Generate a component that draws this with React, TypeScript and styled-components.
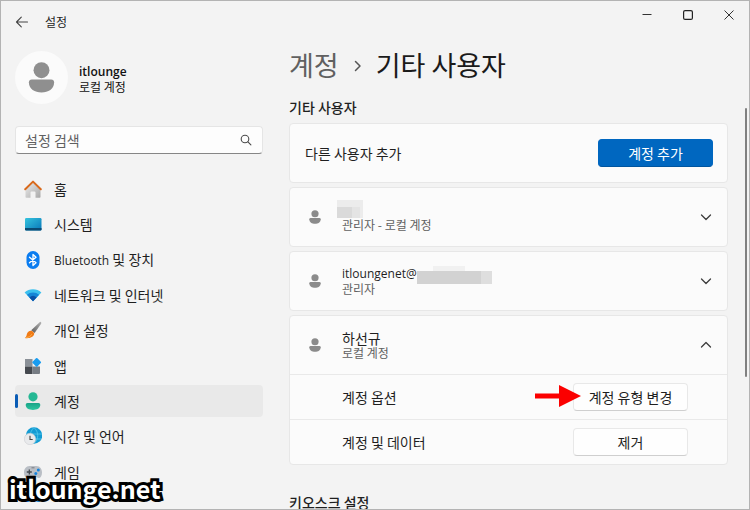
import React from "react";
import styled, { createGlobalStyle, css } from "styled-components";

const GlobalStyle = createGlobalStyle`
  * { box-sizing: border-box; }
  html, body, #root { height: 100%; }
  body {
    margin: 0;
    background: #f3f3f3;
    color: #1f1f1f;
    font-family: "Noto Sans CJK KR", "Noto Sans", sans-serif;
    font-size: 14px;
    line-height: 18px;
  }
  button, input { font: inherit; color: inherit; }
  svg { display: block; flex: none; }
`;

const Window = styled.div`
  position: relative;
  display: flex;
  flex-direction: column;
  height: 100vh;
  border: 1px solid #b3b3b3;
  background: #f3f3f3;
  overflow: hidden;
`;

const TitleBar = styled.header`
  display: flex;
  flex: none;
  align-items: flex-start;
  justify-content: space-between;
  height: 43px;
`;

const TitleGroup = styled.div`
  display: flex;
  align-items: center;
  gap: 16px;
  height: 42px;
  padding-left: 14px;
  font-size: 12px;
`;

const IconButton = styled.button`
  display: grid;
  place-items: center;
  padding: 0;
  border: 0;
  background: none;
`;

const WindowControls = styled.div`
  display: grid;
  grid-template-columns: repeat(3, 41px);
  height: 28px;
`;

const Body = styled.div`
  display: flex;
  flex: 1;
  min-height: 0;
`;

const Sidebar = styled.aside`
  display: flex;
  flex-direction: column;
  flex: none;
  width: 262px;
  padding: 7px 0 7px 14px;
`;

const Profile = styled.div`
  display: flex;
  align-items: center;
  gap: 11px;
`;

const Avatar = styled.div`
  display: grid;
  place-items: center;
  width: 53px;
  height: 53px;
  border-radius: 50%;
  background: #fbfbfb;
`;

const ProfileText = styled.div`
  display: flex;
  flex-direction: column;
  padding-top: 2px;
  font-size: 12px;
  line-height: 15px;
  color: #111;
`;

const ProfileName = styled.strong`
  font: 600 12px/15px "Open Sans", sans-serif;
`;

const SearchBox = styled.label`
  display: flex;
  flex: none;
  align-items: center;
  height: 28px;
  margin: 22px 0 19px;
  padding: 0 10px 0 9px;
  border: 1px solid #e5e5e5;
  border-bottom-color: #868686;
  border-radius: 4px;
  background: #fdfdfd;
`;

const SearchInput = styled.input`
  flex: 1;
  min-width: 0;
  padding: 0;
  border: 0;
  outline: 0;
  background: none;
  &::placeholder { color: #606060; opacity: 1; }
`;

const NavViewport = styled.nav`
  flex: 1;
  min-height: 0;
  overflow: hidden;
`;

const NavList = styled.div`
  display: flex;
  flex-direction: column;
  justify-content: space-between;
  min-height: 350px;
`;

const NavItem = styled.a<{ $active?: boolean }>`
  display: flex;
  align-items: center;
  gap: 12px;
  height: 32px;
  padding-left: 9px;
  border-radius: 4px;
  color: #1f1f1f;
  text-decoration: none;
  ${(p) =>
    p.$active &&
    css`
      position: relative;
      background: #e9e9e9;
      &::before {
        content: "";
        position: absolute;
        left: 0;
        top: 9px;
        width: 3px;
        height: 14px;
        border-radius: 2px;
        background: #0a5cb5;
      }
    `}
`;

const Main = styled.main`
  flex: 1;
  min-width: 0;
  padding: 3px 21px 0 26px;
`;

const Breadcrumb = styled.h1`
  display: flex;
  align-items: center;
  margin: 0;
  font-size: 27px;
  font-weight: 400;
  line-height: 36px;
  color: #1a1a1a;
`;

const Parent = styled.a`
  color: #606060;
  text-decoration: none;
`;

const Separator = styled.span`
  display: grid;
  padding: 2px 14px 0 15px;
`;

const SectionTitle = styled.h2`
  margin: 0;
  padding: 15px 0 7px;
  font-size: 14px;
  font-weight: 500;
  line-height: 18px;
`;

const Cards = styled.div`
  display: flex;
  flex-direction: column;
  gap: 4px;
  margin-bottom: 13px;
`;

const Card = styled.section`
  border: 1px solid #e7e7e7;
  border-radius: 4px;
  background: #fbfbfb;
`;

const CardRow = styled.div`
  display: flex;
  align-items: center;
  justify-content: space-between;
  height: 58px;
  padding: 0 14px 0 15px;
`;

const UserHeader = styled.button`
  display: flex;
  align-items: center;
  width: 100%;
  height: 58px;
  padding: 0 15px 0 18px;
  border: 0;
  background: none;
  text-align: left;
`;

const UserText = styled.span`
  display: flex;
  flex: 1;
  flex-direction: column;
  padding-left: 20px;
`;

const UserName = styled.span`
  display: flex;
  height: 16px;
  font-size: 14px;
  line-height: 16px;
`;

const LatinName = styled.span`
  font: 12px/16px "Open Sans", sans-serif;
`;

const UserKind = styled.span`
  font-size: 12px;
  line-height: 14px;
  color: #616161;
`;

const NameMask = styled.svg`
  margin: -2px 0 0 -5px;
  overflow: visible;
`;

const OptionRow = styled.div`
  display: flex;
  align-items: center;
  justify-content: space-between;
  height: 45px;
  padding: 0 39px 0 52px;
  border-top: 1px solid #e9e9e9;
`;

const ActionButton = styled.button<{ $primary?: boolean }>`
  position: relative;
  width: 115px;
  height: 28px;
  padding: 0;
  border: 1px solid ${(p) => (p.$primary ? "#0067c0" : "#e8e8e8")};
  border-bottom-color: ${(p) => (p.$primary ? "#00559f" : "#cfcfcf")};
  border-radius: 4px;
  background: ${(p) => (p.$primary ? "#0067c0" : "#fefefe")};
  color: ${(p) => (p.$primary ? "#fff" : "#1f1f1f")};
  line-height: 18px;
`;

const Pointer = styled.svg`
  position: absolute;
  left: -39px;
  top: 1px;
`;

const ScrollThumb = styled.div`
  position: absolute;
  right: 2px;
  top: 107px;
  width: 2px;
  height: 53%;
  border-radius: 1px;
  background: #808080;
`;

const Watermark = styled.div`
  position: absolute;
  left: 8px;
  bottom: 5px;
  font-size: 25px;
  font-weight: 700;
  line-height: 32px;
  color: #fff;
  -webkit-text-stroke: 6px #000;
  paint-order: stroke fill;
`;

const LatinText = styled.span`
  font-family: "Open Sans", sans-serif;
  font-size: 12px;
`;

function Person({ size, color }: { size: number; color: string }) {
  return (
    <svg width={size} height={size} viewBox="0 0 32 32" fill={color}>
      <circle cx="16" cy="8.5" r="8.2" />
      <path d="M6 18h20a3 3 0 0 1 3 3c0 7-6 10.500-13 10.500S3 28 3 21a3 3 0 0 1 3-3z" />
    </svg>
  );
}

function Chevron({ up }: { up?: boolean }) {
  return (
    <svg width="12" height="12" viewBox="0 0 12 12" fill="none" stroke="#3d3d3d" strokeWidth="1.3" strokeLinecap="round" strokeLinejoin="round">
      <path d={up ? "M1.5 8 6 3.500l4.5 4.5" : "M1.5 4 6 8.5 10.5 4"} />
    </svg>
  );
}

const icons: Record<string, React.ReactNode> = {
  home: (
    <>
      <path d="M1.500 8.500 9 2l7.500 6.500V17a.8.8 0 0 1-.8.8H11.500V12.500a1 1 0 0 0-1-1h-3a1 1 0 0 0-1 1v5.300H2.300a.8.8 0 0 1-.8-.8z" fill="url(#wall)" />
      <path d="M1.200 9.300 9 1.600l7.800 7.700" fill="none" stroke="#d9691b" strokeWidth="2" strokeLinecap="round" strokeLinejoin="round" />
    </>
  ),
  system: (
    <>
      <rect x="1" y="3" width="16.500" height="12.500" rx="1.200" fill="url(#screen)" />
      <path d="M1 13h16.500v1.300a1.200 1.200 0 0 1-1.200 1.200H2.200A1.200 1.200 0 0 1 1 14.300z" fill="#0b4a72" />
    </>
  ),
  bluetooth: (
    <>
      <rect x="2.500" y="0" width="13" height="18" rx="6.500" fill="#0a7cf0" />
      <path d="m5.500 6.200 6.500 5.600L9 14.500v-11l3 2.700-6.500 5.600" fill="none" stroke="#fff" strokeWidth="1.300" strokeLinejoin="round" strokeLinecap="round" />
    </>
  ),
  network: (
    <>
      <path d="M.6 6.500a12.500 12.500 0 0 1 16.800 0L9 15.300z" fill="#3cc0ee" />
      <path d="M2.900 8.800a9 9 0 0 1 12.200 0L9 15.300z" fill="#1585d6" />
      <path d="M5.400 11.400a5.400 5.400 0 0 1 7.200 0L9 15.300z" fill="#0a4fa5" />
    </>
  ),
  brush: (
    <>
      <path d="M16.200.7c1 .2 1.400 1 .9 2L10.600 12 7.200 9.300z" fill="url(#handle)" />
      <path d="M6.800 9.700c1.700.2 3.200 1.500 3.500 3.100-.8 3.600-5.300 5-9.500 4.200 1.500-.8 1.700-2 2.100-3.900.5-2 2-3.400 3.900-3.400z" fill="#f07b16" />
      <path d="M2.200 16.500c2.800-.2 4.700-1.400 5.600-3.300" stroke="#ffb04a" fill="none" />
    </>
  ),
  apps: (
    <>
      <path d="M1 2h7.500v7.500H1z" fill="#8a9097" />
      <path d="M1 9.500h7.500V17H2a1 1 0 0 1-1-1z" fill="#45494f" />
      <path d="M8.500 9.500H16V16a1 1 0 0 1-1 1H8.500z" fill="#777d84" />
      <rect x="9.300" y="2" width="6.800" height="6.800" rx="1" transform="rotate(45 12.700 5.400)" fill="#199cf0" />
    </>
  ),
  account: (
    <>
      <circle cx="9" cy="4.800" r="4.600" fill="#25b894" />
      <path d="M3.500 11h11a1.800 1.800 0 0 1 1.800 1.800c0 3.400-3.300 5.200-7.300 5.200s-7.300-1.800-7.300-5.200A1.800 1.800 0 0 1 3.500 11z" fill="url(#body)" />
    </>
  ),
  time: (
    <>
      <circle cx="10" cy="8.500" r="8.200" fill="#149bd3" />
      <path d="M2 7h16M3 12h14M10 .5c-5 5-5 11 0 16M10 .5c5 5 5 11 0 16" fill="none" stroke="#5bd0ee" strokeWidth=".7" />
      <circle cx="6" cy="12" r="5.700" fill="#e9eaec" stroke="#c7c9cc" strokeWidth=".5" />
      <path d="M6 8.800V12.500h2.700" fill="none" stroke="#454545" strokeWidth="1.100" />
    </>
  ),
  game: (
    <>
      <path d="M5.500 3h7C16 3 18 6 18 9.500S16.500 15 14.800 15c-1.500 0-2.300-1.500-3.300-1.500h-5C5.500 13.500 4.700 15 3.200 15 1.500 15 0 13 0 9.500S2 3 5.500 3z" fill="#b9bec5" />
      <path d="M5.300 6.500v5M2.800 9h5" stroke="#444a50" strokeWidth="1.300" />
      <circle cx="14.300" cy="7" r="1.500" fill="#1683dc" />
      <circle cx="11.800" cy="10.500" r="1.500" fill="#1683dc" />
      <path d="M7.500 4.800h3" stroke="#757a80" />
    </>
  ),
  access: (
    <>
      <circle cx="9" cy="2" r="2" fill="#1683dc" />
      <path d="M2.500 3 9 6l6.500-3M9 6v5l-3.500 6M9 11l3.500 6" stroke="#1683dc" strokeWidth="1.400" fill="none" strokeLinecap="round" />
    </>
  ),
};

function NavIcon({ name }: { name: string }) {
  return (
    <svg width="18" height="18" viewBox="0 0 18 18" aria-hidden="true">
      {icons[name]}
    </svg>
  );
}

function Gradients() {
  return (
    <svg width="0" height="0" aria-hidden="true">
      <defs>
        <linearGradient id="wall" x1="0" y1="0" x2="1" y2="1">
          <stop stopColor="#ececec" />
          <stop offset="1" stopColor="#a9a9a9" />
        </linearGradient>
        <linearGradient id="screen" x1="0" y1="0" x2="1" y2="1">
          <stop stopColor="#35c4de" />
          <stop offset="1" stopColor="#0876b8" />
        </linearGradient>
        <linearGradient id="handle" x1="1" y1="0" x2="0" y2="1">
          <stop stopColor="#b5b5b5" />
          <stop offset="1" stopColor="#5a5a5a" />
        </linearGradient>
        <linearGradient id="body" x1="0" y1="0" x2="0" y2="1">
          <stop stopColor="#19a387" />
          <stop offset="1" stopColor="#2cc6a0" />
        </linearGradient>
      </defs>
    </svg>
  );
}

const navItems = [
  { icon: "home", label: "홈" },
  { icon: "system", label: "시스템" },
  { icon: "bluetooth", label: <><LatinText>Bluetooth</LatinText> 및 장치</> },
  { icon: "network", label: "네트워크 및 인터넷" },
  { icon: "brush", label: "개인 설정" },
  { icon: "apps", label: "앱" },
  { icon: "account", label: "계정", active: true },
  { icon: "time", label: "시간 및 언어" },
  { icon: "game", label: "게임" },
];

interface UserProps {
  name: React.ReactNode;
  kind: string;
  open?: boolean;
  children?: React.ReactNode;
}

function UserCard({ name, kind, open, children }: UserProps) {
  return (
    <Card>
      <UserHeader type="button" aria-expanded={!!open}>
        <Person size={14} color="#8b8b8b" />
        <UserText>
          <UserName>{name}</UserName>
          <UserKind>{kind}</UserKind>
        </UserText>
        <Chevron up={open} />
      </UserHeader>
      {children}
    </Card>
  );
}

export default function App() {
  return (
    <Window>
      <GlobalStyle />
      <TitleBar>
        <TitleGroup>
          <IconButton type="button" aria-label="뒤로">
            <svg width="14" height="12" viewBox="0 0 14 12" fill="none" stroke="#444" strokeWidth="1.100" strokeLinecap="round" strokeLinejoin="round">
              <path d="M12.500 6h-11M6.300 1.200 1.500 6l4.800 4.800" />
            </svg>
          </IconButton>
          <span>설정</span>
        </TitleGroup>
        <WindowControls>
          <IconButton type="button" aria-label="최소화">
            <svg width="10" height="10" viewBox="0 0 10 10" stroke="#333"><path d="M.5 4.500h9" /></svg>
          </IconButton>
          <IconButton type="button" aria-label="최대화">
            <svg width="10" height="10" viewBox="0 0 10 10" fill="none" stroke="#222" strokeWidth="1.200"><rect x=".6" y=".6" width="8.800" height="8.800" rx="1.500" /></svg>
          </IconButton>
          <IconButton type="button" aria-label="닫기">
            <svg width="10" height="10" viewBox="0 0 10 10" stroke="#333"><path d="m.5.5 9 9m0-9-9 9" /></svg>
          </IconButton>
        </WindowControls>
      </TitleBar>
      <Body>
        <Sidebar>
          <Profile>
            <Avatar><Person size={31} color="#8f8f8f" /></Avatar>
            <ProfileText>
              <ProfileName>itlounge</ProfileName>
              <span>로컬 계정</span>
            </ProfileText>
          </Profile>
          <SearchBox>
            <SearchInput type="text" placeholder="설정 검색" aria-label="설정 검색" />
            <svg width="12" height="12" viewBox="0 0 12 12" fill="none" stroke="#4a4a4a" strokeWidth="1.100" strokeLinecap="round">
              <circle cx="5" cy="5" r="3.800" />
              <path d="m7.900 7.900 3 3" />
            </svg>
          </SearchBox>
          <NavViewport>
            <NavList>
              {navItems.map((item) => (
                <NavItem key={item.icon} href="#" $active={item.active} aria-current={item.active ? "page" : undefined}>
                  <NavIcon name={item.icon} />
                  <span>{item.label}</span>
                </NavItem>
              ))}
              <NavItem href="#" aria-label="접근성">
                <NavIcon name="access" />
              </NavItem>
            </NavList>
          </NavViewport>
        </Sidebar>
        <Main>
          <Breadcrumb>
            <Parent href="#">계정</Parent>
            <Separator>
              <svg width="8" height="12" viewBox="0 0 8 12" fill="none" stroke="#555" strokeWidth="1.500" strokeLinecap="round" strokeLinejoin="round">
                <path d="m1.500 1.500 4.500 4.500-4.500 4.500" />
              </svg>
            </Separator>
            <span>기타 사용자</span>
          </Breadcrumb>
          <SectionTitle>기타 사용자</SectionTitle>
          <Cards>
            <Card>
              <CardRow>
                <span>다른 사용자 추가</span>
                <ActionButton type="button" $primary>계정 추가</ActionButton>
              </CardRow>
            </Card>
            <UserCard
              kind="관리자 - 로컬 계정"
              name={
                <NameMask width="26" height="18" viewBox="0 0 26 18" aria-hidden="true">
                  <path d="M0 0h26v18H0z" fill="#ececec" />
                  <path d="M0 7h15v11H0z" fill="#dadada" />
                  <path d="M15 7h8v11h-8z" fill="#e4e4e4" />
                </NameMask>
              }
            />
            <UserCard
              kind="관리자"
              name={
                <>
                  <LatinName>itloungenet@</LatinName>
                  <svg width="75" height="18" viewBox="0 0 75 18" aria-hidden="true">
                    <path d="M16 0h32v5H16z" fill="#f1f1f1" />
                    <path d="M0 5h64v13H0z" fill="#d2d2d2" />
                    <path d="M64 5h11v13H64z" fill="#dedede" />
                  </svg>
                </>
              }
            />
            <UserCard kind="로컬 계정" name="하선규" open>
              <OptionRow>
                <span>계정 옵션</span>
                <ActionButton type="button">
                  계정 유형 변경
                  <Pointer width="46" height="22" viewBox="0 0 46 22" fill="#fb0000" aria-hidden="true">
                    <path d="M0 8.500h24V0l22 11-22 11v-8.500H0z" />
                  </Pointer>
                </ActionButton>
              </OptionRow>
              <OptionRow>
                <span>계정 및 데이터</span>
                <ActionButton type="button">제거</ActionButton>
              </OptionRow>
            </UserCard>
          </Cards>
          <SectionTitle>키오스크 설정</SectionTitle>
        </Main>
      </Body>
      <ScrollThumb />
      <Watermark>itlounge.net</Watermark>
      <Gradients />
    </Window>
  );
}
